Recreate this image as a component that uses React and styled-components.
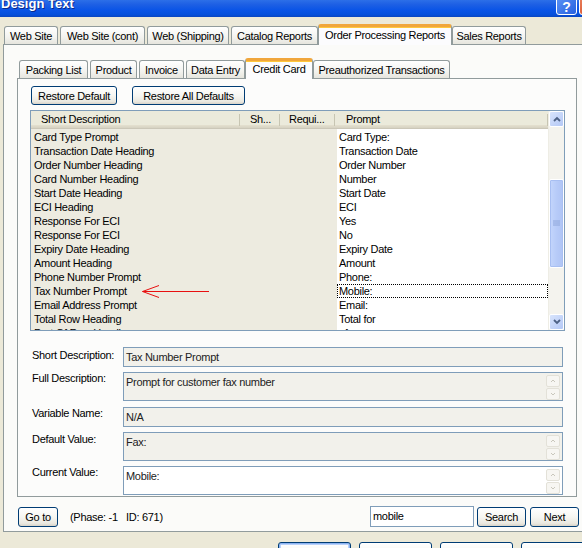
import React from 'react';
import styled, { createGlobalStyle } from 'styled-components';

const Global = createGlobalStyle`
  html, body { margin: 0; padding: 0; }
  body {
    width: 582px; height: 548px; overflow: hidden;
    background: #ECE9D8;
    font-family: "Liberation Sans", Arial, sans-serif;
    font-size: 11px; letter-spacing: -0.3px; color: #000;
  }
  #root { width: 582px; height: 548px; overflow: hidden; }
`;

const Window = styled.div`
  width: 604px;
  height: 548px;
  background: #ECE9D8;
  display: flex;
  flex-direction: column;
`;

const TitleBar = styled.div`
  height: 17px;
  flex: none;
  display: flex;
  align-items: flex-start;
  justify-content: space-between;
  background: linear-gradient(to bottom, #2C6FE8 0%, #1E60E4 25%, #0A54E6 60%, #0650DC 85%, #0A46C0 100%);
  overflow: hidden;
`;

const Title = styled.div`
  color: #fff;
  font-weight: bold;
  font-size: 13px;
  line-height: 13px;
  letter-spacing: 0;
  margin: -3px 0 0 1px;
  text-shadow: 1px 1px 0 #0A2A8A;
`;

const Caption = styled.div`
  display: flex;
  gap: 2px;
  margin: -4px 4px 0 0;
`;

const CapBtn = styled.div`
  width: 21px;
  height: 19px;
  box-sizing: border-box;
  border: 1px solid #fff;
  border-radius: 3px;
  background: ${p => p.$red
    ? 'linear-gradient(135deg, #E8825E, #D5401A)'
    : 'linear-gradient(135deg, #5C93F5, #2560E0)'};
  color: #fff;
  font-weight: bold;
  font-size: 14px;
  line-height: 20px;
  text-align: center;
`;

const TabStrip = styled.div`
  display: flex;
  align-items: flex-end;
  height: 20px;
  flex: none;
  padding-left: ${p => p.$pad}px;
  margin-top: ${p => p.$top}px;
  position: relative;
  z-index: 2;
`;

const Tab = styled.div`
  box-sizing: border-box;
  width: ${p => p.$w}px;
  height: ${p => (p.$active ? 21 : 18)}px;
  margin: ${p => (p.$active ? '0 0 -1px -2px' : '0 2px 0 0')};
  border: 1px solid #919B9C;
  border-bottom: none;
  border-radius: 3px 3px 0 0;
  background: ${p => (p.$active ? '#FCFCFE' : 'linear-gradient(to bottom, #FFFFFF, #F3F3EF 60%, #E6E5DE)')};
  ${p => p.$active && 'border-top: 3px solid #F0A63C; box-shadow: inset 0 1px 0 #FFC83C;'}
  display: flex;
  align-items: center;
  justify-content: center;
  white-space: nowrap;
  padding-bottom: ${p => (p.$active ? 3 : 0)}px;
  position: relative;
  z-index: ${p => (p.$active ? 2 : 1)};
`;

const OuterPanel = styled.div`
  box-sizing: border-box;
  margin-left: 3px;
  width: 590px;
  height: 488px;
  flex: none;
  border: 1px solid #919B9C;
  background: #FBFBF9;
  padding: 13px 13px 0 13px;
  display: flex;
  flex-direction: column;
`;

const InnerPanel = styled.div`
  box-sizing: border-box;
  width: 560px;
  height: 419px;
  border: 1px solid #919B9C;
  background: #FCFCFB;
  padding: 7px 11px 0 12px;
  display: flex;
  flex-direction: column;
`;

const ButtonRow = styled.div`
  display: flex;
  gap: 15px;
  padding-left: 1px;
`;

const Button = styled.button`
  box-sizing: border-box;
  width: ${p => p.$w}px;
  height: ${p => p.$h || 19}px;
  margin-left: ${p => p.$ml || 0}px;
  padding: 0;
  border: 1px solid #003C74;
  border-radius: 3px;
  background: linear-gradient(to bottom, #FFFFFF 0%, #F6F6F2 50%, #EAE8E0 85%, #D8D3C8 100%);
  ${p => p.$default && 'box-shadow: inset 0 0 0 1px #8CB4F2, inset 0 0 0 2px #B9D1FA;'}
  font-family: "Liberation Sans", Arial, sans-serif;
  font-size: 11px;
  letter-spacing: -0.3px;
  color: #000;
  line-height: 16px;
  flex: none;
`;

const List = styled.div`
  position: relative;
  box-sizing: border-box;
  margin-top: 5px;
  width: 535px;
  height: 221px;
  border: 1px solid #7F9DB9;
  display: flex;
  overflow: hidden;
`;

const ListMain = styled.div`
  width: 517px;
  display: flex;
  flex-direction: column;
`;

const Header = styled.div`
  height: 18px;
  flex: none;
  display: grid;
  grid-template-columns: 209px 40px 55px 213px;
  background: linear-gradient(to bottom, #EBEADB 0%, #EBEADB 80%, #E2DECD 85%, #D6D2C2 100%);
  box-sizing: border-box;
  border-bottom: 1px solid #CBC7B8;
`;

const HeadCell = styled.div`
  position: relative;
  padding-left: ${p => p.$pad}px;
  line-height: 17px;
  white-space: nowrap;
  overflow: hidden;
  &:after {
    content: "";
    position: absolute;
    right: 0;
    top: 3px;
    height: 12px;
    width: 1px;
    background: #C7C5B2;
    box-shadow: 1px 0 0 #fff;
  }
`;

const Rows = styled.div`
  flex: 1;
  overflow: hidden;
  padding-top: 1px;
  background: linear-gradient(to right, #EDEBE0 0, #EDEBE0 306px, #fff 306px);
`;

const Row = styled.div`
  height: 14px;
  display: grid;
  grid-template-columns: 306px 211px;
  line-height: 14px;
  white-space: nowrap;
`;

const Cell = styled.div`
  padding-left: ${p => p.$pad}px;
  box-sizing: border-box;
  overflow: hidden;
  ${p => p.$focus && 'outline: 1px dotted #000; outline-offset: -1px;'}
`;

const Scroll = styled.div`
  width: 16px;
  display: flex;
  flex-direction: column;
  background: #F4F3EE;
  border-left: 1px solid #EEEDE5;
`;

const ScrollBtn = styled.div`
  box-sizing: border-box;
  height: 16px;
  border: 1px solid #fff;
  border-radius: 2px;
  background: linear-gradient(135deg, #D8E4FC, #B4C8F6);
  display: flex;
  align-items: center;
  justify-content: center;
  flex: none;
`;

const Thumb = styled.div`
  box-sizing: border-box;
  margin-top: ${p => p.$top}px;
  height: ${p => p.$h}px;
  border: 1px solid #fff;
  border-radius: 2px;
  background: linear-gradient(to right, #C4D6FC, #B7CBF8 50%, #AFC4F5);
  box-shadow: inset 0 0 0 1px #A8BFF2;
  display: flex;
  align-items: center;
  justify-content: center;
  flex: none;
`;

const Spacer = styled.div`
  flex: 1;
`;

const Arrow = styled.svg`
  position: absolute;
  left: 110px;
  top: 172px;
`;

const Form = styled.div`
  margin-top: 16px;
  display: flex;
  flex-direction: column;
  gap: 5px;
`;

const FormRow = styled.div`
  display: flex;
  margin-top: ${p => p.$mt || 0}px;
`;

const Label = styled.div`
  width: 93px;
  padding-left: 2px;
  box-sizing: border-box;
  padding-top: ${p => p.$pt}px;
  flex: none;
  white-space: nowrap;
`;

const Field = styled.div`
  box-sizing: border-box;
  width: 440px;
  height: ${p => p.$h}px;
  border: 1px solid #7F9DB9;
  background: ${p => (p.$white ? '#fff' : '#F2F1EB')};
  padding: 3px 2px 0 2px;
  display: flex;
  justify-content: space-between;
  line-height: 13px;
  color: #222;
`;

const Spin = styled.div`
  display: flex;
  flex-direction: column;
  gap: 1px;
  margin-top: -1px;
`;

const SpinBtn = styled.div`
  width: 14px;
  height: 12px;
  box-sizing: border-box;
  border: 1px solid #E3E1D8;
  border-radius: 2px;
  background: #F7F6F2;
  display: flex;
  align-items: center;
  justify-content: center;
`;

const Bottom = styled.div`
  display: flex;
  align-items: center;
  margin-top: 9px;
  padding-left: 1px;
  height: 21px;
`;

const Info = styled.div`
  margin-left: 12px;
  white-space: nowrap;
`;

const SearchBox = styled.div`
  box-sizing: border-box;
  margin-left: auto;
  width: 104px;
  height: 21px;
  border: 1px solid #7F9DB9;
  background: #fff;
  padding: 3px 2px 0;
  line-height: 13px;
`;

const DialogButtons = styled.div`
  display: flex;
  gap: 8px;
  padding-left: 278px;
  margin-top: 10px;
`;

const rows = [
  ['Card Type Prompt', 'Card Type:'],
  ['Transaction Date Heading', 'Transaction Date'],
  ['Order Number Heading', 'Order Number'],
  ['Card Number Heading', 'Number'],
  ['Start Date Heading', 'Start Date'],
  ['ECI Heading', 'ECI'],
  ['Response For ECI', 'Yes'],
  ['Response For ECI', 'No'],
  ['Expiry Date Heading', 'Expiry Date'],
  ['Amount Heading', 'Amount'],
  ['Phone Number Prompt', 'Phone:'],
  ['Tax Number Prompt', 'Mobile:'],
  ['Email Address Prompt', 'Email:'],
  ['Total Row Heading', 'Total for'],
  ['Part Of Row Heading', 'of'],
];

const UpGlyph = ({ down }) => (
  <svg width="8" height="6" viewBox="0 0 8 6">
    <path d={down ? 'M1 1 L4 4 L7 1' : 'M1 5 L4 2 L7 5'} stroke="#4D6185" strokeWidth="1.8" fill="none" />
  </svg>
);

const SmallGlyph = ({ down }) => (
  <svg width="6" height="4" viewBox="0 0 6 4">
    <path d={down ? 'M1 1 L3 3 L5 1' : 'M1 3 L3 1 L5 3'} stroke="#C9C7BC" strokeWidth="1" fill="none" />
  </svg>
);

const Spinner = () => (
  <Spin>
    <SpinBtn><SmallGlyph /></SpinBtn>
    <SpinBtn><SmallGlyph down /></SpinBtn>
  </Spin>
);

export default function App() {
  return (
    <>
      <Global />
      <Window>
        <TitleBar>
          <Title>Design Text</Title>
          <Caption>
            <CapBtn>?</CapBtn>
            <CapBtn $red>×</CapBtn>
          </Caption>
        </TitleBar>
        <TabStrip $pad={4} $top={7}>
          <Tab $w={54}>Web Site</Tab>
          <Tab $w={85}>Web Site (cont)</Tab>
          <Tab $w={82}>Web (Shipping)</Tab>
          <Tab $w={87}>Catalog Reports</Tab>
          <Tab $w={134} $active>Order Processing Reports</Tab>
          <Tab $w={74}>Sales Reports</Tab>
        </TabStrip>
        <OuterPanel>
          <TabStrip $pad={2} $top={0}>
            <Tab $w={69}>Packing List</Tab>
            <Tab $w={47}>Product</Tab>
            <Tab $w={45}>Invoice</Tab>
            <Tab $w={59}>Data Entry</Tab>
            <Tab $w={68} $active>Credit Card</Tab>
            <Tab $w={137}>Preauthorized Transactions</Tab>
          </TabStrip>
          <InnerPanel>
            <ButtonRow>
              <Button $w={86}>Restore Default</Button>
              <Button $w={113}>Restore All Defaults</Button>
            </ButtonRow>
            <List>
              <ListMain>
                <Header>
                  <HeadCell $pad={10}>Short Description</HeadCell>
                  <HeadCell $pad={10}>Sh...</HeadCell>
                  <HeadCell $pad={9}>Requi...</HeadCell>
                  <HeadCell $pad={11}>Prompt</HeadCell>
                </Header>
                <Rows>
                  {rows.map(([a, b], i) => (
                    <Row key={i}>
                      <Cell $pad={3}>{a}</Cell>
                      <Cell $pad={2} $focus={i === 11}>{b}</Cell>
                    </Row>
                  ))}
                </Rows>
              </ListMain>
              <Scroll>
                <ScrollBtn><UpGlyph /></ScrollBtn>
                <Thumb $top={52} $h={89}>
                  <svg width="7" height="7" viewBox="0 0 7 7">
                    <path d="M0 1h7M0 3h7M0 5h7" stroke="#8EA6DA" strokeWidth="1" />
                  </svg>
                </Thumb>
                <Spacer />
                <ScrollBtn><UpGlyph down /></ScrollBtn>
              </Scroll>
              <Arrow width="70" height="16" viewBox="0 0 70 16">
                <path d="M1.5 8.5 H68 M1.5 8.5 L18 2.5 M1.5 8.5 L18 14.5" stroke="#E81010" strokeWidth="1" fill="none" />
              </Arrow>
            </List>
            <Form>
              <FormRow>
                <Label $pt={2}>Short Description:</Label>
                <Field $h={20}>Tax Number Prompt</Field>
              </FormRow>
              <FormRow>
                <Label $pt={0}>Full Description:</Label>
                <Field $h={29}>Prompt for customer fax number<Spinner /></Field>
              </FormRow>
              <FormRow $mt={1}>
                <Label $pt={0}>Variable Name:</Label>
                <Field $h={20}>N/A</Field>
              </FormRow>
              <FormRow>
                <Label $pt={1}>Default Value:</Label>
                <Field $h={29}>Fax:<Spinner /></Field>
              </FormRow>
              <FormRow>
                <Label $pt={0}>Current Value:</Label>
                <Field $h={29} $white>Mobile:<Spinner /></Field>
              </FormRow>
            </Form>
          </InnerPanel>
          <Bottom>
            <Button $w={40} $h={20}>Go to</Button>
            <Info>(Phase: -1&nbsp;&nbsp; ID: 671)</Info>
            <SearchBox>mobile</SearchBox>
            <Button $w={49} $h={20} $ml={3}>Search</Button>
            <Button $w={49} $h={20} $ml={4}>Next</Button>
          </Bottom>
        </OuterPanel>
        <DialogButtons>
          <Button $w={73} $h={23} $default>OK</Button>
          <Button $w={73} $h={23}>Cancel</Button>
          <Button $w={73} $h={23}>Apply</Button>
          <Button $w={73} $h={23}>Help</Button>
        </DialogButtons>
      </Window>
    </>
  );
}
